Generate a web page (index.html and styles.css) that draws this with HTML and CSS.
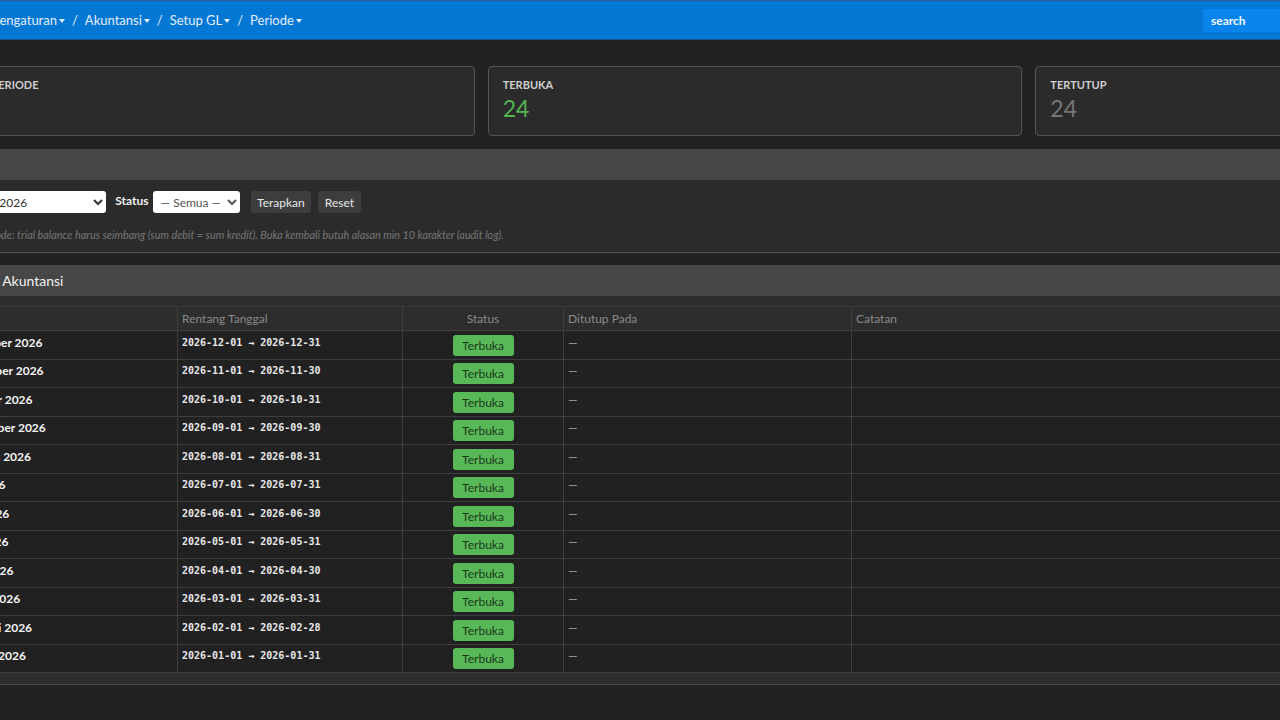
FILE: index.html
```html
<!DOCTYPE html>
<html lang="id">
<head>
    <meta charset="UTF-8">
    <meta name="viewport" content="width=device-width, initial-scale=1.0">
    <title>Periode Akuntansi</title>
    <link rel="stylesheet" href="styles.css">
</head>
<body>
<div class="page">
    <nav class="topbar">
        <div class="crumbs">
            <a class="crumb">Pengaturan<span class="caret"></span></a>
            <span class="sep">/</span>
            <a class="crumb">Akuntansi<span class="caret"></span></a>
            <span class="sep">/</span>
            <a class="crumb">Setup GL<span class="caret"></span></a>
            <span class="sep">/</span>
            <a class="crumb">Periode<span class="caret"></span></a>
        </div>
        <input class="search" type="text" placeholder="search">
    </nav>

    <main class="content">
        <div class="stats">
            <div class="stat-card">
                <div class="stat-label">Total Periode</div>
                <div class="stat-value">24</div>
            </div>
            <div class="stat-card">
                <div class="stat-label">Terbuka</div>
                <div class="stat-value open">24</div>
            </div>
            <div class="stat-card">
                <div class="stat-label">Tertutup</div>
                <div class="stat-value closed">24</div>
            </div>
        </div>

        <section class="panel">
            <div class="panel-head">Filter</div>
            <div class="panel-body">
                <form class="filter-row">
                    <label class="lbl-year">Tahun</label>
                    <select class="year">
                        <option>2026</option>
                    </select>
                    <label class="lbl-status">Status</label>
                    <select class="status">
                        <option>— Semua —</option>
                    </select>
                    <button type="button">Terapkan</button>
                    <button type="button">Reset</button>
                </form>
                <p class="hint">Tutup periode: trial balance harus seimbang (sum debit = sum kredit). Buka kembali butuh alasan min 10 karakter (audit log).</p>
            </div>
        </section>

        <section class="panel">
            <div class="panel-head">Periode Akuntansi</div>
            <div class="panel-body table-body">
                <table class="periods">
                    <thead>
                        <tr>
                            <th class="c-name">Periode</th>
                            <th class="c-range">Rentang Tanggal</th>
                            <th class="c-status">Status</th>
                            <th class="c-closed">Ditutup Pada</th>
                            <th>Catatan</th>
                        </tr>
                    </thead>
                    <tbody>
                        <tr><td class="name">Desember 2026</td><td class="range">2026-12-01 → 2026-12-31</td><td class="status-cell"><span class="badge">Terbuka</span></td><td class="dash">—</td><td></td></tr>
                        <tr><td class="name">November 2026</td><td class="range">2026-11-01 → 2026-11-30</td><td class="status-cell"><span class="badge">Terbuka</span></td><td class="dash">—</td><td></td></tr>
                        <tr><td class="name">Oktober 2026</td><td class="range">2026-10-01 → 2026-10-31</td><td class="status-cell"><span class="badge">Terbuka</span></td><td class="dash">—</td><td></td></tr>
                        <tr><td class="name">September 2026</td><td class="range">2026-09-01 → 2026-09-30</td><td class="status-cell"><span class="badge">Terbuka</span></td><td class="dash">—</td><td></td></tr>
                        <tr><td class="name">Agustus 2026</td><td class="range">2026-08-01 → 2026-08-31</td><td class="status-cell"><span class="badge">Terbuka</span></td><td class="dash">—</td><td></td></tr>
                        <tr><td class="name">Juli 2026</td><td class="range">2026-07-01 → 2026-07-31</td><td class="status-cell"><span class="badge">Terbuka</span></td><td class="dash">—</td><td></td></tr>
                        <tr><td class="name">Juni 2026</td><td class="range">2026-06-01 → 2026-06-30</td><td class="status-cell"><span class="badge">Terbuka</span></td><td class="dash">—</td><td></td></tr>
                        <tr><td class="name">Mei 2026</td><td class="range">2026-05-01 → 2026-05-31</td><td class="status-cell"><span class="badge">Terbuka</span></td><td class="dash">—</td><td></td></tr>
                        <tr><td class="name">April 2026</td><td class="range">2026-04-01 → 2026-04-30</td><td class="status-cell"><span class="badge">Terbuka</span></td><td class="dash">—</td><td></td></tr>
                        <tr><td class="name">Maret 2026</td><td class="range">2026-03-01 → 2026-03-31</td><td class="status-cell"><span class="badge">Terbuka</span></td><td class="dash">—</td><td></td></tr>
                        <tr><td class="name">Februari 2026</td><td class="range">2026-02-01 → 2026-02-28</td><td class="status-cell"><span class="badge">Terbuka</span></td><td class="dash">—</td><td></td></tr>
                        <tr><td class="name">Januari 2026</td><td class="range">2026-01-01 → 2026-01-31</td><td class="status-cell"><span class="badge">Terbuka</span></td><td class="dash">—</td><td></td></tr>
                    </tbody>
                </table>
            </div>
        </section>
    </main>
</div>
</body>
</html>
```

FILE: styles.css
```css
html, body {
    margin: 0;
    background-color: #222;
    overflow: hidden;
}
body {
    font-family: Lato, "Open Sans", sans-serif;
    color: #eee;
    font-size: 12px;
}
.page {
    width: 1630px;
    margin-left: -60px;
}

/* top bar */
.topbar {
    display: flex;
    align-items: center;
    height: 38px;
    padding: 0 167px 0 52px;
    background-color: #0277d4;
    border-top: 1px solid #2d5c96;
    border-bottom: 1px solid #1c4f86;
}
.crumbs {
    flex: 1;
    display: flex;
    align-items: center;
    gap: 7px;
    font-size: 13px;
    color: #e4edf7;
}
.crumb {
    display: flex;
    align-items: center;
}
.caret {
    display: inline-block;
    margin-left: 2px;
    margin-top: 1px;
    border-left: 3.5px solid transparent;
    border-right: 3.5px solid transparent;
    border-top: 4px solid #e4edf7;
}
.search {
    width: 200px;
    height: 23px;
    box-sizing: border-box;
    padding: 0 8px;
    border: none;
    background-color: #0884ec;
    color: #fff;
    font-family: Lato, sans-serif;
    font-size: 12px;
    font-weight: bold;
}
.search::placeholder {
    color: #f4f8fc;
    opacity: 1;
}

/* content */
.content {
    padding-top: 26px;
}
.stats {
    display: flex;
    gap: 13px;
}
.stat-card {
    flex: 1;
    padding: 10px 14px 13px;
    background-color: #2b2b2b;
    border: 1px solid #555;
    border-radius: 4px;
}
.stat-label {
    font-size: 11px;
    font-weight: bold;
    text-transform: uppercase;
    color: #cfcfcf;
    line-height: 15px;
}
.stat-value {
    font-size: 23px;
    line-height: 28px;
    margin-top: 2px;
    color: #ddd;
}
.stat-value.open {
    color: #52b552;
}
.stat-value.closed {
    color: #777;
}

/* panels */
.panel {
    margin-top: 13px;
}
.panel + .panel {
    margin-top: 12px;
}
.panel-head {
    height: 31px;
    line-height: 31px;
    padding: 0 12px;
    background-color: #464646;
    font-size: 14px;
    color: #f2f2f2;
}
.panel-body {
    padding: 11px 10px 10px;
    background-color: #2b2b2b;
    border-bottom: 1px solid #555;
}
.filter-row {
    display: flex;
    align-items: center;
    gap: 8px;
}
.filter-row label {
    font-weight: bold;
    color: #f2f2f2;
    margin-top: -4px;
}
.filter-row .lbl-year {
    margin-right: 1px;
}
.filter-row .lbl-status {
    margin-left: 1px;
    margin-right: -4px;
}
.filter-row select {
    height: 22px;
    border: none;
    border-radius: 3px;
    background-color: #fff;
    font-family: Lato, sans-serif;
    font-size: 12px;
    color: #333;
    padding: 0 4px;
}
.filter-row .year {
    width: 115px;
}
.filter-row .status {
    width: 87px;
    color: #555;
    margin-right: 3px;
}
.filter-row button {
    height: 22px;
    padding: 0 6.5px;
    border: none;
    border-radius: 3px;
    background-color: #3d3d3d;
    color: #e8e8e8;
    font-family: Lato, sans-serif;
    font-size: 12px;
    margin-right: -1px;
}
.hint {
    margin: 15px 0 0;
    font-size: 10.8px;
    line-height: 14px;
    font-style: italic;
    color: #777;
}

/* table */
.table-body {
    padding: 10px 10px 11px;
    background-color: #2d2d2d;
    border-bottom-color: #464646;
}
.periods {
    width: 100%;
    table-layout: fixed;
    border-collapse: collapse;
}
.periods th {
    height: 23px;
    padding: 0 4px;
    text-align: left;
    font-weight: normal;
    font-size: 12px;
    color: #8a8a8a;
    border: 1px solid #3e3e3e;
    border-top-color: #3a3a3a;
}
.periods th.c-name { width: 218px; }
.periods th.c-range { width: 216px; }
.periods th.c-status { width: 152px; text-align: center; }
.periods th.c-closed { width: 279px; }
.periods td {
    padding: 3.5px 4px 3px;
    vertical-align: top;
    line-height: 15px;
    background-color: #212121;
    border: 1px solid #3e3e3e;
}
.periods td.name {
    padding-left: 6px;
    font-weight: bold;
    font-size: 12px;
    color: #f4f4f4;
}
.periods td.range {
    font-family: "DejaVu Sans Mono", monospace;
    font-size: 10px;
    font-weight: bold;
    color: #e8e8e8;
}
.periods td.status-cell {
    text-align: center;
}
.periods td.dash {
    color: #a8a8a8;
}
.badge {
    display: inline-block;
    width: 61px;
    height: 21px;
    line-height: 21px;
    border-radius: 3px;
    background-color: #58b858;
    color: #1c3a1c;
    font-size: 12px;
    vertical-align: top;
}
```
